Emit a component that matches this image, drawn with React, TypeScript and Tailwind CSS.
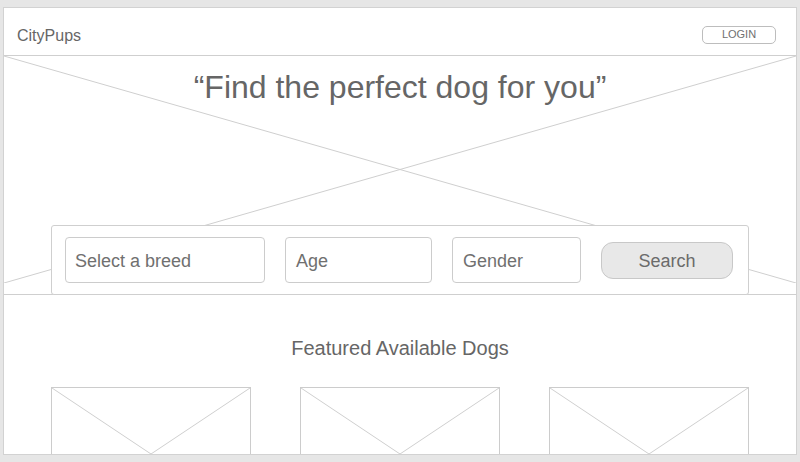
import React from "react";

const Cross = ({ w, h, className }: { w: number; h: number; className: string }) => (
  <svg className={className} viewBox={`0 0 ${w} ${h}`} preserveAspectRatio="none">
    <line x1="0" y1="0" x2={w} y2={h} stroke="#cfcfcf" strokeWidth="1" vectorEffect="non-scaling-stroke" />
    <line x1={w} y1="0" x2="0" y2={h} stroke="#cfcfcf" strokeWidth="1" vectorEffect="non-scaling-stroke" />
  </svg>
);

const Card = () => (
  <div className="relative w-[200px] h-[134px] shrink-0 border border-[#cccccc] bg-white">
    <Cross w={200} h={134} className="absolute inset-0 w-full h-full pointer-events-none" />
  </div>
);

export default function App() {
  return (
    <div
      className="w-[800px] h-[462px] bg-[#e6e6e6] pt-[7px] pl-[3px] overflow-hidden"
      style={{ fontFamily: '"Liberation Sans", Arial, sans-serif' }}
    >
      <div className="w-[794px] h-[448px] bg-white border border-[#d2d2d2] overflow-hidden flex flex-col">
        {/* Header */}
        <div className="h-[48px] shrink-0 border-b border-[#cfcfcf] flex items-center justify-between pt-[8px] pl-[13px] pr-[20px]">
          <span className="text-[16px] text-[#666666] leading-none">CityPups</span>
          <button className="mb-[2px] w-[74px] h-[18px] border border-[#bdbdbd] rounded-[5px] text-[11px] leading-none text-[#707070] flex items-center justify-center">
            LOGIN
          </button>
        </div>

        {/* Hero */}
        <div className="relative h-[239px] shrink-0 border-b border-[#cfcfcf] flex flex-col">
          <Cross w={792} h={227} className="absolute left-0 top-0 w-full h-[227px] pointer-events-none" />
          <h1 className="relative text-center text-[32px] leading-[36px] text-[#666666] pt-[13px]">
            “Find the perfect dog for you”
          </h1>
          <div className="relative mt-auto mx-[47px] mb-[-1px] h-[70px] bg-white border border-[#cfcfcf] rounded-[3px] flex items-start pt-[11px] pl-[13px] gap-[20px]">
            <div className="w-[200px] h-[46px] border border-[#cccccc] rounded-[4px] flex items-center pl-[9px] pt-[3px] text-[18px] text-[#707070]">
              Select a breed
            </div>
            <div className="w-[147px] h-[46px] border border-[#cccccc] rounded-[4px] flex items-center pl-[10px] pt-[3px] text-[18px] text-[#707070]">
              Age
            </div>
            <div className="w-[129px] h-[46px] border border-[#cccccc] rounded-[4px] flex items-center pl-[10px] pt-[3px] text-[18px] text-[#707070]">
              Gender
            </div>
            <button className="mt-[5px] w-[132px] h-[37px] bg-[#e8e8e8] border border-[#c8c8c8] rounded-[12px] pt-[2px] text-[18px] text-[#6b6b6b] flex items-center justify-center">
              Search
            </button>
          </div>
        </div>

        {/* Featured */}
        <div className="flex flex-col items-center">
          <h2 className="mt-[41px] text-[20px] leading-[24px] text-[#666666]">Featured Available Dogs</h2>
          <div className="mt-[27px] w-full flex pl-[47px] gap-[49px]">
            <Card />
            <Card />
            <Card />
          </div>
        </div>
      </div>
    </div>
  );
}
